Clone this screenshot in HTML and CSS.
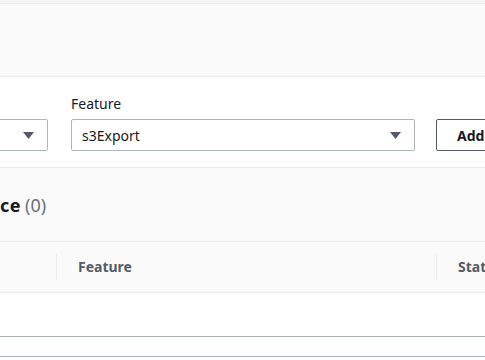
FILE: index.html
```html
<!DOCTYPE html>
<html>
<head>
<meta charset="utf-8">
<link rel="stylesheet" href="styles.css">
</head>
<body>
<div class="topbar"></div>
<div class="hero"></div>
<div class="form">
  <div class="field field-first">
    <div class="label">&nbsp;</div>
    <div class="select">
      <span class="value"></span>
      <svg class="caret" width="11" height="7" viewBox="0 0 11 7"><path d="M0 0H11L5.5 7Z" fill="#545b64"/></svg>
    </div>
  </div>
  <div class="field field-feature">
    <div class="label">Feature</div>
    <div class="select">
      <span class="value">s3Export</span>
      <svg class="caret" width="11" height="7" viewBox="0 0 11 7"><path d="M0 0H11L5.5 7Z" fill="#545b64"/></svg>
    </div>
  </div>
  <button class="btn">Add feature</button>
</div>
<div class="section">
  <div class="heading"><span class="clip">Features enabled for this resour</span><span class="tail">ce</span><span class="count">(0)</span></div>
  <div class="table">
    <div class="th th-first"><div class="th-inner">&nbsp;</div></div>
    <div class="th"><div class="th-inner">Feature</div></div>
    <div class="th"><div class="th-inner">Status</div></div>
  </div>
  <div class="empty"></div>
  <div class="rule"></div>
  <div class="gap"></div>
  <div class="rule"></div>
</div>
</body>
</html>
```

FILE: styles.css
```css
html, body {
  margin: 0;
  padding: 0;
  overflow: hidden;
  width: 485px;
  height: 360px;
  background: #ffffff;
  font-family: "Noto Sans", "Liberation Sans", sans-serif;
  color: #16191f;
}

.topbar {
  height: 3px;
  background: #f2f3f3;
  border-bottom: 1px solid #eaeded;
}

.hero {
  height: 72px;
  background: #fafafa;
  border-bottom: 1px solid #eaeded;
}

.form {
  display: flex;
  align-items: flex-end;
  padding: 17px 0 16px 0;
  background: #ffffff;
  border-bottom: 1px solid #eaeded;
  overflow: hidden;
  white-space: nowrap;
}

.field {
  display: flex;
  flex-direction: column;
  flex: none;
}

.field-first {
  width: 120px;
  margin-left: -72px;
  margin-right: 23px;
}

.field-feature {
  width: 344px;
  margin-right: 21px;
}

.label {
  font-size: 14px;
  line-height: 20px;
  margin-bottom: 5px;
  color: #16191f;
}

.select {
  box-sizing: border-box;
  height: 32px;
  border: 1px solid #aab7b8;
  border-radius: 2px;
  display: flex;
  align-items: center;
  justify-content: space-between;
  padding: 0 13px 0 10px;
  font-size: 14px;
  background: #ffffff;
}

.value {
  line-height: 20px;
  padding-top: 1px;
}

.caret {
  display: block;
}

.btn {
  flex: none;
  box-sizing: border-box;
  height: 32px;
  padding: 0 20px;
  border: 1px solid #545b64;
  border-radius: 2px;
  background: #ffffff;
  font-family: "Noto Sans", "Liberation Sans", sans-serif;
  font-size: 14px;
  font-weight: 700;
  color: #16191f;
}

.section {
  background: #fafafa;
}

.heading {
  display: flex;
  align-items: center;
  height: 24px;
  padding: 25px 0 24px 0;
  font-size: 18px;
  line-height: 24px;
  white-space: nowrap;
  border-bottom: 1px solid #eaeded;
  overflow: hidden;
}

.clip {
  flex: none;
  width: 300px;
  margin-left: -300px;
  overflow: hidden;
  text-align: right;
  font-weight: 700;
}

.tail {
  flex: none;
  font-weight: 700;
  color: #16191f;
  letter-spacing: 0.5px;
  margin-right: 4px;
}

.count {
  color: #687078;
  font-weight: 400;
}

.table {
  display: grid;
  grid-template-columns: 156px 380px 200px;
  margin-left: -100px;
  background: #fafafa;
  border-bottom: 1px solid #eaeded;
}

.th {
  padding: 12px 0;
}

.th-inner {
  border-left: 1px solid #eaeded;
  padding-left: 21px;
  line-height: 26px;
  font-size: 14px;
  font-weight: 700;
  color: #545b64;
  white-space: nowrap;
}

.th-first .th-inner {
  border-left: none;
}

.empty {
  height: 43px;
  background: #ffffff;
}

.rule {
  height: 1px;
  background: #aab7b8;
}

.gap {
  height: 19px;
  background: #ffffff;
}
```
